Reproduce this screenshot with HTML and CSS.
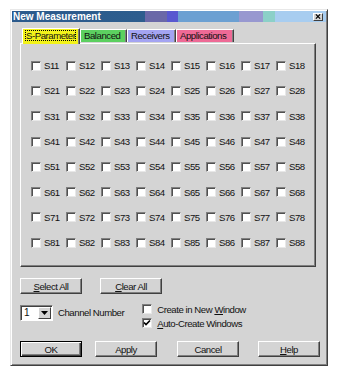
FILE: index.html
```html
<!DOCTYPE html>
<html>
<head>
<meta charset="utf-8">
<link rel="stylesheet" href="styles.css">
</head>
<body>
<div class="dialog">
  <div class="titlebar">
    <span class="title">New Measurement</span>
    <span class="close">
      <svg width="8" height="7" viewBox="0 0 8 7"><path d="M1 0.5 L7 6.5 M7 0.5 L1 6.5" stroke="#000" stroke-width="1.6"/></svg>
    </span>
  </div>
  <div class="content">
    <div class="tabs">
      <div class="tab tab-sparam active"><span class="focus">S-Parameter</span></div>
      <div class="tab tab-bal">Balanced</div>
      <div class="tab tab-rec">Receivers</div>
      <div class="tab tab-app">Applications</div>
    </div>
    <div class="panel">
      <div class="grid" id="grid"></div>
    </div>
    <div class="row-btns">
      <div class="btn btn-sel"><u>S</u>elect All</div>
      <div class="btn btn-clr"><u>C</u>lear All</div>
    </div>
    <div class="row-opts">
      <div class="combo">
        <span class="combo-val">1</span>
        <span class="combo-btn"><svg width="7" height="4" viewBox="0 0 7 4"><path d="M0 0 H7 L3.5 4 Z" fill="#000"/></svg></span>
      </div>
      <span class="chan">Channel Number</span>
      <div class="opts">
        <label class="opt"><span class="cb"></span><span>Create in New <u>W</u>indow</span></label>
        <label class="opt"><span class="cb checked"><svg width="8" height="8" viewBox="0 0 8 8"><path d="M1 3.5 L3 5.5 L7 1.5" stroke="#000" stroke-width="1.7" fill="none"/></svg></span><span><u>A</u>uto-Create Windows</span></label>
      </div>
    </div>
    <div class="row-foot">
      <div class="btn btn-ok default">OK</div>
      <div class="btn btn-apply">Apply</div>
      <div class="btn btn-cancel">Cancel</div>
      <div class="btn btn-help"><u>H</u>elp</div>
    </div>
  </div>
</div>
<script>
  var g = document.getElementById('grid');
  for (var r = 1; r <= 8; r++) {
    for (var c = 1; c <= 8; c++) {
      var cell = document.createElement('div');
      cell.className = 'cell';
      cell.innerHTML = '<span class="cb"></span><span class="lbl">S' + r + c + '</span>';
      g.appendChild(cell);
    }
  }
</script>
</body>
</html>
```
FILE: styles.css
```css
html, body {
  margin: 0;
  padding: 0;
  background: #ffffff;
}
body {
  font-family: "Liberation Sans", Arial, sans-serif;
  font-size: 9.6px;
  letter-spacing: -0.45px;
  color: #111;
}
.dialog {
  margin: 9px 0 0 10px;
  width: 318px;
  height: 357px;
  box-sizing: border-box;
  background: #d4d4d4;
  border-top: 1px solid #e8e8e8;
  border-left: 1px solid #e8e8e8;
  border-right: 1px solid #404040;
  border-bottom: 1px solid #404040;
  box-shadow: inset 1px 1px 0 #ffffff, inset -1px -1px 0 #808080;
  padding: 1px 1px 0 1px;
}
.titlebar {
  height: 11px;
  display: flex;
  align-items: center;
  justify-content: space-between;
  background: linear-gradient(to right,
    #2b5a8c 0px, #2d5d8e 133px,
    #6a68a8 133px, #6a68a8 155px,
    #5858d0 155px, #5858d0 166px,
    #6ca0d2 166px, #6ca0d2 227px,
    #9898d0 227px, #9898d0 251px,
    #8cd0c8 251px, #8cd0c8 263px,
    #a8cdf0 263px, #a8cdf0 100%);
  padding: 0 3px 0 1px;
}
.title {
  color: #fff;
  font-weight: bold;
  font-size: 10px;
  letter-spacing: 0;
  line-height: 11px;
}
.close {
  width: 10px;
  height: 8px;
  background: #d4d4d4;
  box-sizing: border-box;
  border-top: 1px solid #fff;
  border-left: 1px solid #fff;
  border-right: 1px solid #404040;
  border-bottom: 1px solid #404040;
  display: flex;
  align-items: center;
  justify-content: center;
}
.close svg { width: 6px; height: 5px; }
.content {
  padding: 5px 0 0 8px;
}
.tabs {
  display: flex;
  align-items: flex-end;
  height: 16px;
  padding-left: 2px;
  position: relative;
  z-index: 1;
}
.tab {
  height: 13px;
  line-height: 12px;
  padding: 0 3px;
  box-sizing: border-box;
  border-top: 1px solid #fff;
  border-left: 1px solid #fff;
  border-right: 1px solid #404040;
  box-shadow: inset -1px 0 0 #808080;
  margin-bottom: 1px;
  white-space: nowrap;
}
.tab.active {
  height: 16px;
  line-height: 14px;
  margin-bottom: -1px;
  padding: 0 2px;
}
.focus {
  outline: 1px dotted #000;
  outline-offset: -1px;
  padding: 0 1px;
  display: inline-block;
  line-height: 11px;
}
.tab-sparam { background: #f2f21a; width: 58px; }
.tab-bal { background: #5cd060; width: 47px; }
.tab-rec { background: #a4a4f2; width: 49px; }
.tab-app { background: #ee6a96; width: 58px; }
.panel {
  width: 296px;
  height: 224px;
  box-sizing: border-box;
  border-top: 1px solid #fff;
  border-left: 1px solid #fff;
  border-right: 1px solid #404040;
  border-bottom: 1px solid #404040;
  box-shadow: inset -1px -1px 0 #808080;
  padding: 9px 0 0 10px;
}
.grid {
  display: grid;
  grid-template-columns: repeat(8, 35px);
  grid-template-rows: repeat(8, 25.3px);
}
.cell {
  display: flex;
  align-items: center;
}
.cb {
  width: 10px;
  height: 10px;
  box-sizing: border-box;
  background: #fff;
  border-top: 1px solid #808080;
  border-left: 1px solid #808080;
  border-right: 1px solid #e8e8e8;
  border-bottom: 1px solid #e8e8e8;
  box-shadow: inset 1px 1px 0 #505050;
  flex: none;
  display: flex;
  align-items: center;
  justify-content: center;
}
.lbl {
  margin-left: 3px;
}
.btn {
  height: 16px;
  box-sizing: border-box;
  border-top: 1px solid #fff;
  border-left: 1px solid #fff;
  border-right: 1px solid #404040;
  border-bottom: 1px solid #404040;
  box-shadow: inset -1px -1px 0 #808080;
  display: flex;
  align-items: center;
  justify-content: center;
  width: 62px;
}
.btn.default {
  border: 1px solid #000;
  box-shadow: inset 1px 1px 0 #fff, inset -1px -1px 0 #404040, inset -2px -2px 0 #808080;
}
.row-btns {
  display: flex;
  margin-top: 11px;
}
.btn-clr { margin-left: 18px; }
.row-opts {
  display: flex;
  align-items: flex-start;
  margin-top: 10px;
  height: 26px;
}
.combo {
  margin-top: 1px;
  width: 33px;
  height: 16px;
  box-sizing: border-box;
  background: #fff;
  border-top: 1px solid #808080;
  border-left: 1px solid #808080;
  border-right: 1px solid #fff;
  border-bottom: 1px solid #fff;
  box-shadow: inset 1px 1px 0 #404040;
  display: flex;
  align-items: stretch;
  padding: 1px;
}
.combo-val {
  flex: 1;
  padding-left: 2px;
  line-height: 12px;
  font-size: 10px;
}
.combo-btn {
  width: 13px;
  box-sizing: border-box;
  background: #d4d4d4;
  border-top: 1px solid #fff;
  border-left: 1px solid #fff;
  border-right: 1px solid #404040;
  border-bottom: 1px solid #404040;
  display: flex;
  align-items: center;
  justify-content: center;
}
.chan {
  margin-left: 5px;
  line-height: 16px;
  margin-top: 1px;
}
.opts {
  margin-left: 18px;
  display: flex;
  flex-direction: column;
  gap: 4px;
}
.opt {
  display: flex;
  align-items: center;
  height: 10px;
  gap: 5px;
}
.row-foot {
  display: flex;
  margin-top: 11px;
}
.btn-apply { margin-left: 13px; }
.btn-cancel { margin-left: 20px; }
.btn-help { margin-left: 19px; }
```
